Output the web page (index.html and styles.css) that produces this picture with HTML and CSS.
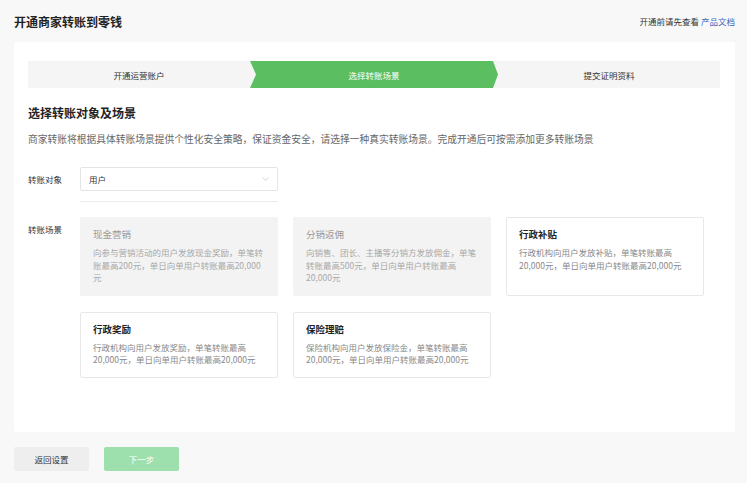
FILE: index.html
```html
<!DOCTYPE html>
<html lang="zh-CN">
<head>
    <meta charset="UTF-8">
    <meta name="viewport" content="width=device-width, initial-scale=1.0">
    <title>开通商家转账到零钱</title>

    <link rel="stylesheet" href="styles.css">

</head>

<body>

    <header class="top">
        <h1 class="page-title">开通商家转账到零钱</h1>
        <div class="doc-tip">开通前请先查看 <a href="#">产品文档</a></div>
    </header>

    <main class="panel">

        <div class="steps">
            <div class="step">开通运营账户</div>
            <div class="step current">选择转账场景</div>
            <div class="step">提交证明资料</div>
        </div>

        <h2 class="section-title">选择转账对象及场景</h2>
        <p class="section-desc">商家转账将根据具体转账场景提供个性化安全策略，保证资金安全，请选择一种真实转账场景。完成开通后可按需添加更多转账场景</p>

        <div class="form-row">
            <label class="form-label">转账对象</label>
            <div class="form-field">
                <div class="select">
                    <span>用户</span>
                    <svg class="arrow" width="7" height="4" viewBox="0 0 7 4"><path d="M0.5 0.5 L3.5 3.3 L6.5 0.5" fill="none" stroke="#c8c8c8" stroke-width="0.8"/></svg>
                </div>
                <div class="select-line"></div>
            </div>
        </div>

        <div class="form-row scenes-row">
            <label class="form-label">转账场景</label>
            <div class="scenes">

                <div class="scene disabled">
                    <div class="scene-title">现金营销</div>
                    <div class="scene-desc">向参与营销活动的用户发放现金奖励，单笔转账最高200元，单日向单用户转账最高20,000元</div>
                </div>

                <div class="scene disabled">
                    <div class="scene-title">分销返佣</div>
                    <div class="scene-desc">向销售、团长、主播等分销方发放佣金，单笔转账最高500元，单日向单用户转账最高20,000元</div>
                </div>

                <div class="scene">
                    <div class="scene-title">行政补贴</div>
                    <div class="scene-desc">行政机构向用户发放补贴，单笔转账最高20,000元，单日向单用户转账最高20,000元</div>
                </div>

                <div class="scene">
                    <div class="scene-title">行政奖励</div>
                    <div class="scene-desc">行政机构向用户发放奖励，单笔转账最高20,000元，单日向单用户转账最高20,000元</div>
                </div>

                <div class="scene">
                    <div class="scene-title">保险理赔</div>
                    <div class="scene-desc">保险机构向用户发放保险金，单笔转账最高20,000元，单日向单用户转账最高20,000元</div>
                </div>

            </div>
        </div>

    </main>

    <footer class="actions">
        <button class="btn">返回设置</button>
        <button class="btn btn-primary" disabled>下一步</button>
    </footer>

</body>

</html>
```

FILE: styles.css
```css
* {
    box-sizing: border-box;
    margin: 0;
    padding: 0;
}

body {
    background: #f8f8f8;
    font-family: "Noto Sans CJK SC", "Noto Sans", sans-serif;
    color: #333;
    min-height: 100vh;
}

.top {
    height: 42px;
    display: flex;
    align-items: center;
    justify-content: space-between;
    padding: 0 12px 0 14px;
}

.page-title {
    font-size: 12px;
    font-weight: 600;
    color: #222;
}

.doc-tip {
    font-size: 8.5px;
    color: #333;
}

.doc-tip a {
    color: #3d66b8;
    text-decoration: none;
}

.panel {
    background: #fff;
    margin: 0 12px 0 14px;
    padding: 19px 15px 54px 14px;
    border-radius: 2px;
}

.steps {
    display: grid;
    grid-template-columns: 1fr 248px 1fr;
    height: 27px;
    background: #f5f5f5;
    font-size: 8.5px;
    color: #333;
}

.step {
    display: flex;
    align-items: center;
    justify-content: center;
}

.step.current {
    background: #5bbf62;
    color: #fff;
    clip-path: polygon(0 0, calc(100% - 5px) 0, 100% 50%, calc(100% - 5px) 100%, 0 100%, 6px 50%);
}

.section-title {
    margin-top: 16px;
    font-size: 12px;
    line-height: 17px;
    font-weight: 600;
    color: #222;
}

.section-desc {
    margin-top: 11px;
    font-size: 9.75px;
    line-height: 14px;
    color: #666;
}

.form-row {
    display: flex;
    margin-top: 21px;
}

.form-label {
    width: 52px;
    flex-shrink: 0;
    font-size: 8.5px;
    line-height: 24px;
    color: #333;
}

.form-field {
    width: 198px;
}

.select {
    height: 24px;
    border: 1px solid #e4e4e4;
    border-radius: 2px;
    display: flex;
    align-items: center;
    justify-content: space-between;
    padding: 0 8px 0 8px;
    font-size: 8.5px;
    color: #333;
}

.select-line {
    margin-top: 10px;
    height: 1px;
    background: #ececec;
}

.scenes-row {
    margin-top: 15px;
}

.scenes-row .form-label {
    line-height: 12px;
    padding-top: 6px;
}

.scenes {
    display: grid;
    grid-template-columns: repeat(3, 198px);
    column-gap: 15px;
    row-gap: 16px;
}

.scene {
    border: 1px solid #e8e8e8;
    border-radius: 2px;
    padding: 9px 12px 11px 12px;
}

.scene-title {
    font-size: 9.5px;
    line-height: 14px;
    font-weight: 600;
    color: #222;
}

.scene-desc {
    margin-top: 5px;
    font-size: 8.5px;
    line-height: 12.5px;
    color: #888;
}

.scene.disabled {
    background: #f3f3f3;
    border-color: #f3f3f3;
}

.scene.disabled .scene-title {
    font-weight: 400;
    color: #999;
}

.scene.disabled .scene-desc {
    color: #a8a8a8;
}

.actions {
    display: flex;
    gap: 15px;
    padding: 15px 14px;
}

.btn {
    width: 75px;
    height: 24px;
    border: none;
    border-radius: 2px;
    background: #eee;
    font-family: inherit;
    font-size: 8.5px;
    color: #333;
}

.btn-primary {
    background: #9de0ad;
    color: #fff;
}
```
